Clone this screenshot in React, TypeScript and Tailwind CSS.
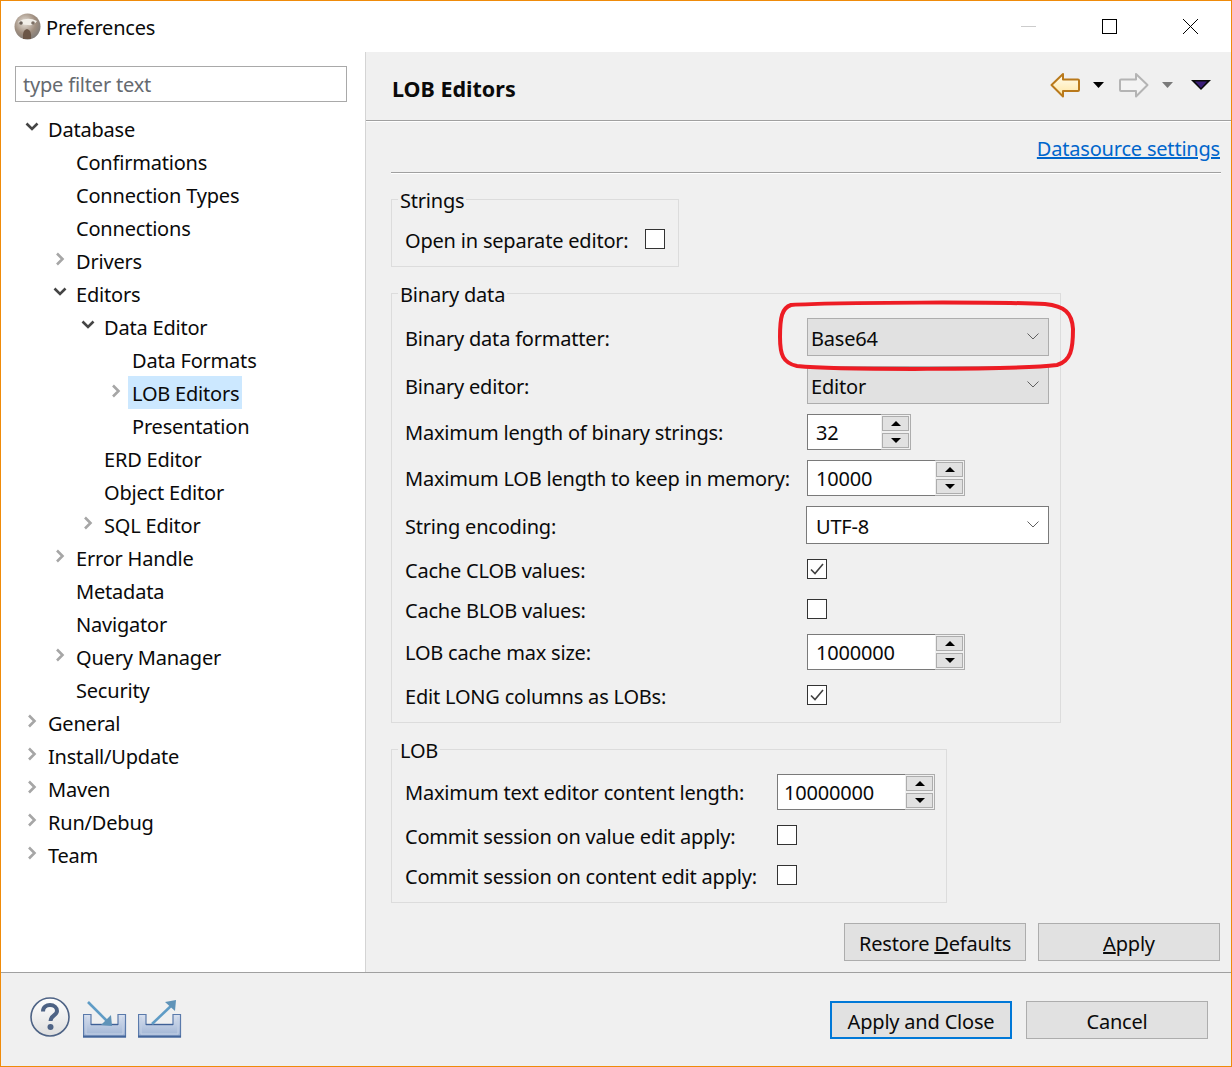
import React from "react";

const INDENT = ["pl-[17px]", "pl-[45px]", "pl-[73px]", "pl-[101px]"];

type Node = { t: string; l: number; c?: "open" | "closed"; sel?: boolean };
const TREE: Node[] = [
  { t: "Database", l: 0, c: "open" },
  { t: "Confirmations", l: 1 },
  { t: "Connection Types", l: 1 },
  { t: "Connections", l: 1 },
  { t: "Drivers", l: 1, c: "closed" },
  { t: "Editors", l: 1, c: "open" },
  { t: "Data Editor", l: 2, c: "open" },
  { t: "Data Formats", l: 3 },
  { t: "LOB Editors", l: 3, c: "closed", sel: true },
  { t: "Presentation", l: 3 },
  { t: "ERD Editor", l: 2 },
  { t: "Object Editor", l: 2 },
  { t: "SQL Editor", l: 2, c: "closed" },
  { t: "Error Handle", l: 1, c: "closed" },
  { t: "Metadata", l: 1 },
  { t: "Navigator", l: 1 },
  { t: "Query Manager", l: 1, c: "closed" },
  { t: "Security", l: 1 },
  { t: "General", l: 0, c: "closed" },
  { t: "Install/Update", l: 0, c: "closed" },
  { t: "Maven", l: 0, c: "closed" },
  { t: "Run/Debug", l: 0, c: "closed" },
  { t: "Team", l: 0, c: "closed" },
];

function Chevron({ kind }: { kind?: "open" | "closed" }) {
  return (
    <span className="w-[27px] mr-[3px] flex items-center justify-center shrink-0 -mt-[3px]">
      {kind === "open" && (
        <svg width="14" height="10" viewBox="0 0 14 10">
          <path d="M1.5 1.5 L7 7 L12.5 1.5" fill="none" stroke="#454545" strokeWidth="2.6" />
        </svg>
      )}
      {kind === "closed" && (
        <svg width="10" height="14" viewBox="0 0 10 14">
          <path d="M2 1.5 L7.5 7 L2 12.5" fill="none" stroke="#a6a6a6" strokeWidth="2.6" />
        </svg>
      )}
    </span>
  );
}

function TreeRow({ n }: { n: Node }) {
  return (
    <div className={`h-[33px] flex items-center whitespace-nowrap ${INDENT[n.l]}`}>
      <Chevron kind={n.c} />
      {n.sel ? (
        <span className="h-[33px] flex items-center bg-[#cce8ff] px-[4px] pt-[2px] -ml-[4px] w-[114px]">{n.t}</span>
      ) : (
        <span className="mt-[2px]">{n.t}</span>
      )}
    </div>
  );
}

function ComboChevron() {
  return (
    <svg width="12" height="7" viewBox="0 0 12 7" className="shrink-0 -mt-[2px]">
      <path d="M0.5 0.5 L6 6 L11.5 0.5" fill="none" stroke="#606060" strokeWidth="1" />
    </svg>
  );
}

function Combo({ value, white }: { value: string; white?: boolean }) {
  return (
    <div
      className={
        white
          ? "h-[38px] w-[243px] -ml-px flex items-center justify-between border border-[#7a7a7a] bg-white pl-[9px] pr-[9px]"
          : "h-[38px] w-[242px] flex items-center justify-between border border-[#adadad] bg-[#e1e1e1] pl-[3px] pr-[9px]"
      }
    >
      <span className="mt-[4px]">{value}</span>
      <ComboChevron />
    </div>
  );
}

function Spinner({ value, fieldW }: { value: string; fieldW: string }) {
  return (
    <div className="h-[36px] flex border border-[#adadad] bg-[#f0f0f0] w-fit">
      <div className={`${fieldW} -m-px h-[36px] border border-r-0 border-[#7a7a7a] bg-white flex items-center box-border`}>
        <span className="mt-[2px]">{value}</span>
      </div>
      <div className="w-[29px] ml-px flex flex-col gap-[2px] p-px">
        <div className="flex-1 border border-[#adadad] bg-[#e1e1e1] flex items-center justify-center">
          <svg width="10" height="5" viewBox="0 0 10 5"><path d="M5 0 L10 5 L0 5 Z" fill="#000" /></svg>
        </div>
        <div className="flex-1 border border-[#adadad] bg-[#e1e1e1] flex items-center justify-center">
          <svg width="10" height="5" viewBox="0 0 10 5"><path d="M0 0 L10 0 L5 5 Z" fill="#000" /></svg>
        </div>
      </div>
    </div>
  );
}

function Check({ checked }: { checked?: boolean }) {
  return (
    <span className="w-[20px] h-[20px] border border-[#333] bg-white flex items-center justify-center shrink-0">
      {checked && (
        <svg width="14" height="12" viewBox="0 0 14 12">
          <path d="M1 6.5 L5 10.5 L13 1" fill="none" stroke="#404040" strokeWidth="1.6" />
        </svg>
      )}
    </span>
  );
}

function Row({ label, w, tall, spin, children }: { label: string; w: string; tall?: boolean; spin?: boolean; children: React.ReactNode }) {
  return (
    <div className={`flex items-center ${tall ? "" : "h-[30px]"}`}>
      <span className={`${w} shrink-0 whitespace-nowrap ${spin ? "mt-[1px]" : "mt-[3px]"}`}>{label}</span>
      {children}
    </div>
  );
}

function Group({ title, w, children }: { title: string; w: string; children: React.ReactNode }) {
  return (
    <fieldset className={`${w} border border-[#dcdcdc] pl-[13px] pt-[12px] pb-[12px] flex flex-col gap-[10px]`}>
      <legend className="-ml-[7px] px-[2px] leading-[29px] h-[26px]">{title}</legend>
      {children}
    </fieldset>
  );
}

function Btn({ children, w, primary }: { children: React.ReactNode; w: string; primary?: boolean }) {
  return (
    <button
      className={`${w} h-[38px] bg-[#e1e1e1] flex items-center justify-center ${
        primary ? "border-2 border-[#0078d7]" : "border border-[#adadad]"
      }`}
    >
      <span className="mt-[4px]">{children}</span>
    </button>
  );
}

function BackArrow() {
  return (
    <svg width="30" height="26" viewBox="0 0 30 26">
      <defs>
        <linearGradient id="ba" x1="0" y1="0" x2="0" y2="1">
          <stop offset="0" stopColor="#fffdf2" />
          <stop offset="1" stopColor="#ffe5a0" />
        </linearGradient>
      </defs>
      <path d="M1.5 13 L13 2 V7.5 H28 Q29 7.5 29 8.5 V18 Q29 19 28 19 H13 V24.5 Z" fill="url(#ba)" stroke="#b9791b" strokeWidth="2" strokeLinejoin="round" />
    </svg>
  );
}

function ForwardArrow() {
  return (
    <svg width="30" height="26" viewBox="0 0 30 26">
      <path d="M28.5 13 L17 2 V7.5 H2 Q1 7.5 1 8.5 V18 Q1 19 2 19 H17 V24.5 Z" fill="#f3f3f3" stroke="#b4b4b4" strokeWidth="2" strokeLinejoin="round" />
    </svg>
  );
}

function Tri({ color }: { color: string }) {
  return (
    <svg width="11" height="6" viewBox="0 0 11 6"><path d="M0 0 H11 L5.5 6 Z" fill={color} /></svg>
  );
}

function Tray({ id }: { id: string }) {
  return (
    <>
      <defs>
        <linearGradient id={id} x1="0" y1="0" x2="0" y2="1">
          <stop offset="0" stopColor="#d9e1ef" />
          <stop offset="1" stopColor="#9db2d3" />
        </linearGradient>
      </defs>
      <path d="M0.5 14.5 H8 V24.5 H35 V14.5 H42.5 V37 H0.5 Z" fill={`url(#${id})`} stroke="#5a7aab" strokeWidth="1.2" />
      <path d="M3 17 V34 H40 V17" fill="none" stroke="#c3d0e5" strokeWidth="1" />
      <path d="M8 24.5 H35" stroke="#3f6096" strokeWidth="1.4" />
      <path d="M0 36.5 H43" stroke="#43659a" strokeWidth="2" />
    </>
  );
}

export default function App() {
  return (
    <div
      className="w-[1232px] h-[1067px] box-border border border-[#ef8b0a] flex flex-col bg-white text-[20px] tracking-[-0.2px] text-[#0a0a0a] overflow-hidden relative"
      style={{ fontFamily: '"Noto Sans", sans-serif' }}
    >
      {/* Title bar */}
      <div className="h-[51px] shrink-0 flex items-center pl-[13px]">
        <svg width="27" height="27" viewBox="0 0 27 27" className="shrink-0">
          <defs>
            <radialGradient id="mole" cx="0.4" cy="0.35" r="0.7">
              <stop offset="0" stopColor="#e8e2da" />
              <stop offset="0.6" stopColor="#a08f80" />
              <stop offset="1" stopColor="#7d7a78" />
            </radialGradient>
          </defs>
          <circle cx="13.5" cy="13.5" r="13" fill="url(#mole)" />
          <path d="M4 9 Q13 3 23 8 Q20 13 14 12 Q8 12 4 9 Z" fill="#f2efe9" />
          <path d="M9 26 Q8 17 13 16 Q18 17 17 26 Z" fill="#6b5647" />
          <circle cx="7" cy="10" r="1.8" fill="#6a6058" />
          <circle cx="19" cy="10" r="1.8" fill="#7d7065" />
        </svg>
        <span className="ml-[5px] mt-[2px]">Preferences</span>
        <div className="ml-auto flex items-center">
          <svg width="15" height="15" viewBox="0 0 15 15" className="mr-[66px]"><path d="M0 7.5 H15" stroke="#cccccc" strokeWidth="1" /></svg>
          <svg width="15" height="15" viewBox="0 0 15 15" className="mr-[66px]"><rect x="0.5" y="0.5" width="14" height="14" fill="none" stroke="#000" /></svg>
          <svg width="15" height="15" viewBox="0 0 15 15" className="mr-[33px]"><path d="M0 0 L15 15 M15 0 L0 15" stroke="#000" strokeWidth="1" /></svg>
        </div>
      </div>

      <div className="h-[920px] shrink-0 flex">
        {/* Left pane */}
        <div className="w-[365px] shrink-0 border-r border-[#d4d4d4] pt-[14px]">
          <div className="ml-[14px] w-[332px] h-[36px] border border-[#a9a9a9] flex items-center pl-[7px] text-[#666a70]">
            <span className="mt-[2px]">type filter text</span>
          </div>
          <div className="mt-[10px]">
            {TREE.map((n) => (
              <TreeRow key={n.t} n={n} />
            ))}
          </div>
        </div>

        {/* Right pane */}
        <div className="flex-1 bg-[#f0f0f0] flex flex-col">
          <div className="h-[69px] shrink-0 border-b border-[#a0a0a0] flex items-center pl-[26px] pr-[20px]">
            <span className="font-bold text-[21.5px] tracking-normal mt-[6px]">LOB Editors</span>
            <div className="ml-auto flex items-center -mt-[3px]">
              <BackArrow />
              <span className="ml-[13px]"><Tri color="#000" /></span>
              <span className="ml-[15px]"><ForwardArrow /></span>
              <span className="ml-[13px]"><Tri color="#7a7a7a" /></span>
              <svg width="20" height="10" viewBox="0 0 20 10" className="ml-[18px]">
                <path d="M0 0 H20 L10 10 Z" fill="#0a0a0a" />
                <path d="M4 1.5 H16 L10 8 Z" fill="#3b1d78" />
              </svg>
            </div>
          </div>
          <div className="h-px bg-white shrink-0" />
          <div className="px-[25px] pr-[10px] flex flex-col">
            <div className="h-[51px] border-b border-[#a0a0a0] flex items-start justify-end pt-[12px]">
              <a className="text-[#0066cc] underline leading-[30px] mr-px">Datasource settings</a>
            </div>
            <div className="h-px bg-white" />
            <div className="pt-[12px] flex flex-col gap-[13px]">
              <Group title="Strings" w="w-[288px]">
                <Row label="Open in separate editor:" w="w-[240px]"><Check /></Row>
              </Group>
              <Group title="Binary data" w="w-[670px]">
                <Row tall label="Binary data formatter:" w="w-[402px]"><Combo value="Base64" /></Row>
                <Row tall label="Binary editor:" w="w-[402px]"><Combo value="Editor" /></Row>
                <Row tall spin label="Maximum length of binary strings:" w="w-[402px]"><Spinner value="32" fieldW="w-[74px] pl-[8px]" /></Row>
                <Row tall spin label="Maximum LOB length to keep in memory:" w="w-[402px]"><Spinner value="10000" fieldW="w-[128px] pl-[8px]" /></Row>
                <Row tall label="String encoding:" w="w-[402px]"><Combo white value="UTF-8" /></Row>
                <Row label="Cache CLOB values:" w="w-[402px]"><Check checked /></Row>
                <Row label="Cache BLOB values:" w="w-[402px]"><Check /></Row>
                <Row tall spin label="LOB cache max size:" w="w-[402px]"><Spinner value="1000000" fieldW="w-[128px] pl-[8px]" /></Row>
                <Row label="Edit LONG columns as LOBs:" w="w-[402px]"><Check checked /></Row>
              </Group>
              <Group title="LOB" w="w-[556px]">
                <Row tall spin label="Maximum text editor content length:" w="w-[372px]"><Spinner value="10000000" fieldW="w-[128px] pl-[6px]" /></Row>
                <Row label="Commit session on value edit apply:" w="w-[372px]"><Check /></Row>
                <Row label="Commit session on content edit apply:" w="w-[372px]"><Check /></Row>
              </Group>
            </div>
            <div className="mt-[20px] flex justify-end gap-[12px] pr-px">
              <Btn w="w-[182px]">Restore <u>D</u>efaults</Btn>
              <Btn w="w-[182px]"><u>A</u>pply</Btn>
            </div>
          </div>
        </div>
      </div>

      {/* Footer */}
      <div className="flex-1 border-t border-[#a0a0a0] bg-[#f0f0f0] flex items-start pl-[29px] pr-[23px]">
        <svg width="40" height="40" viewBox="0 0 40 40" className="mt-[24px] shrink-0">
          <defs>
            <linearGradient id="hp" x1="0" y1="0" x2="0" y2="1">
              <stop offset="0" stopColor="#ffffff" />
              <stop offset="1" stopColor="#dedede" />
            </linearGradient>
          </defs>
          <circle cx="20" cy="20" r="19" fill="url(#hp)" stroke="#4e6385" strokeWidth="1.6" />
          <path d="M13 14.5 C13 10 16.5 8 20 8 C24 8 27 10.5 27 14 C27 18.5 20.5 18.5 20.5 24" fill="none" stroke="#4e6385" strokeWidth="4" />
          <circle cx="20.5" cy="30" r="3" fill="#4e6385" />
        </svg>
        <svg width="44" height="38" viewBox="0 0 44 38" className="ml-[13px] mt-[27px] shrink-0">
          <Tray id="t1" />
          <path d="M5 2 L24 21" stroke="#5f9cc6" strokeWidth="2.6" />
          <path d="M29 26 L18 25 L28 15 Z" fill="#5f93b8" />
        </svg>
        <svg width="44" height="38" viewBox="0 0 44 38" className="ml-[11px] mt-[27px] shrink-0">
          <Tray id="t2" />
          <path d="M14 24 L34 5" stroke="#5f9cc6" strokeWidth="2.6" />
          <path d="M38 0 L27 2 L37 11 Z" fill="#5f93b8" />
        </svg>
        <div className="ml-auto mt-[28px] flex gap-[14px]">
          <Btn w="w-[182px]" primary>Apply and Close</Btn>
          <Btn w="w-[182px]">Cancel</Btn>
        </div>
      </div>

      {/* Red annotation drawn over the form */}
      <svg width="300" height="74" viewBox="0 0 300 74" className="absolute left-[776px] top-[298px] pointer-events-none">
        <path
          d="M14 6 C60 3 230 3 268 5 C288 7 295 14 296 30 C296 50 294 62 280 66 C240 71 60 71 20 67 C6 64 3 56 3 38 C3 18 5 9 14 6 Z"
          fill="none"
          stroke="#ed1c24"
          strokeWidth="4"
        />
      </svg>
    </div>
  );
}
